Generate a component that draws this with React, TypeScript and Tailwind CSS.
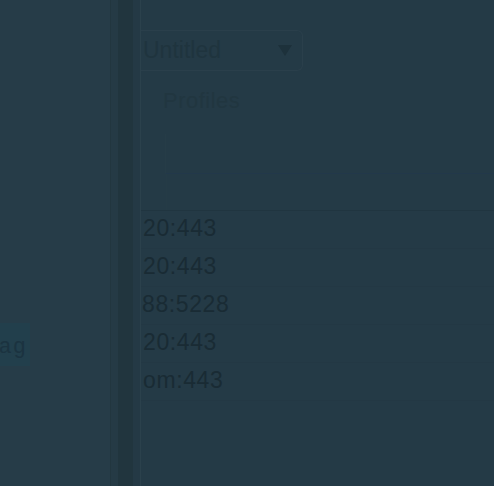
const rows = [
  { text: "20:443", shift: "ml-[2px]" },
  { text: "20:443", shift: "ml-[2px]" },
  { text: "88:5228", shift: "ml-[1px]" },
  { text: "20:443", shift: "ml-[2px]" },
  { text: "om:443", shift: "ml-[2px]" },
];

const App = () => {
  return (
    <div
      className="flex h-[486px] w-[494px] overflow-hidden bg-[#243a46]"
      style={{ fontFamily: '"Liberation Sans", Arial, sans-serif' }}
    >
      {/* left pane */}
      <div className="flex w-[110px] shrink-0 flex-col bg-[#263c48] pt-[323px]">
        <div className="flex h-[43px] w-[30px] items-center justify-end overflow-hidden bg-[#223f4c] pr-[3px] pt-[5px]">
          <span
            className="whitespace-nowrap text-[22px] tracking-[1px] text-[#1b3340]"
            style={{ fontFamily: '"Liberation Mono", monospace' }}
          >
            ag
          </span>
        </div>
      </div>

      {/* splitter */}
      <div className="w-px shrink-0 bg-[#22363f]" />
      <div className="w-[7px] shrink-0 bg-[#253a45]" />
      <div className="w-[15px] shrink-0 bg-[#21353e]" />
      <div className="w-[7px] shrink-0 bg-[#243945]" />
      <div className="w-px shrink-0 bg-[#2b414c]" />

      {/* right pane */}
      <div className="flex min-w-0 flex-1 flex-col overflow-hidden">
        <div className="flex h-[211px] shrink-0 flex-col border-b border-[#203540]">
          <div className="mt-[30px] flex h-[41px] w-[162px] items-center justify-between rounded-r-md border border-l-0 border-[#2a3f4b] pl-[2px] pr-[10px]">
            <span className="text-[23px] text-[#1f343e]">Untitled</span>
            <svg width="14" height="11" viewBox="0 0 14 11">
              <path d="M0 0 L14 0 L7 11 Z" fill="#1d313b" />
            </svg>
          </div>
          <div className="ml-[22px] mt-[13px] text-[22px] tracking-[0.5px] text-[#213640]">Profiles</div>
          <div className="mt-[17px] ml-[24px] h-[40px] border-b border-l border-[#22384a] border-l-[#263c47]" />
          <div className="ml-[25px] flex-1 border-l border-[#253b46]" />
        </div>
        {rows.map((r, i) => (
          <div
            key={i}
            className="flex h-[38px] shrink-0 items-center border-b border-[#233844] whitespace-nowrap"
          >
            <span className={`${r.shift} -mt-[3px] text-[23px] tracking-[0.6px] text-[#192b34]`}>{r.text}</span>
          </div>
        ))}
        <div className="flex-1" />
      </div>
    </div>
  );
};

export default App;
